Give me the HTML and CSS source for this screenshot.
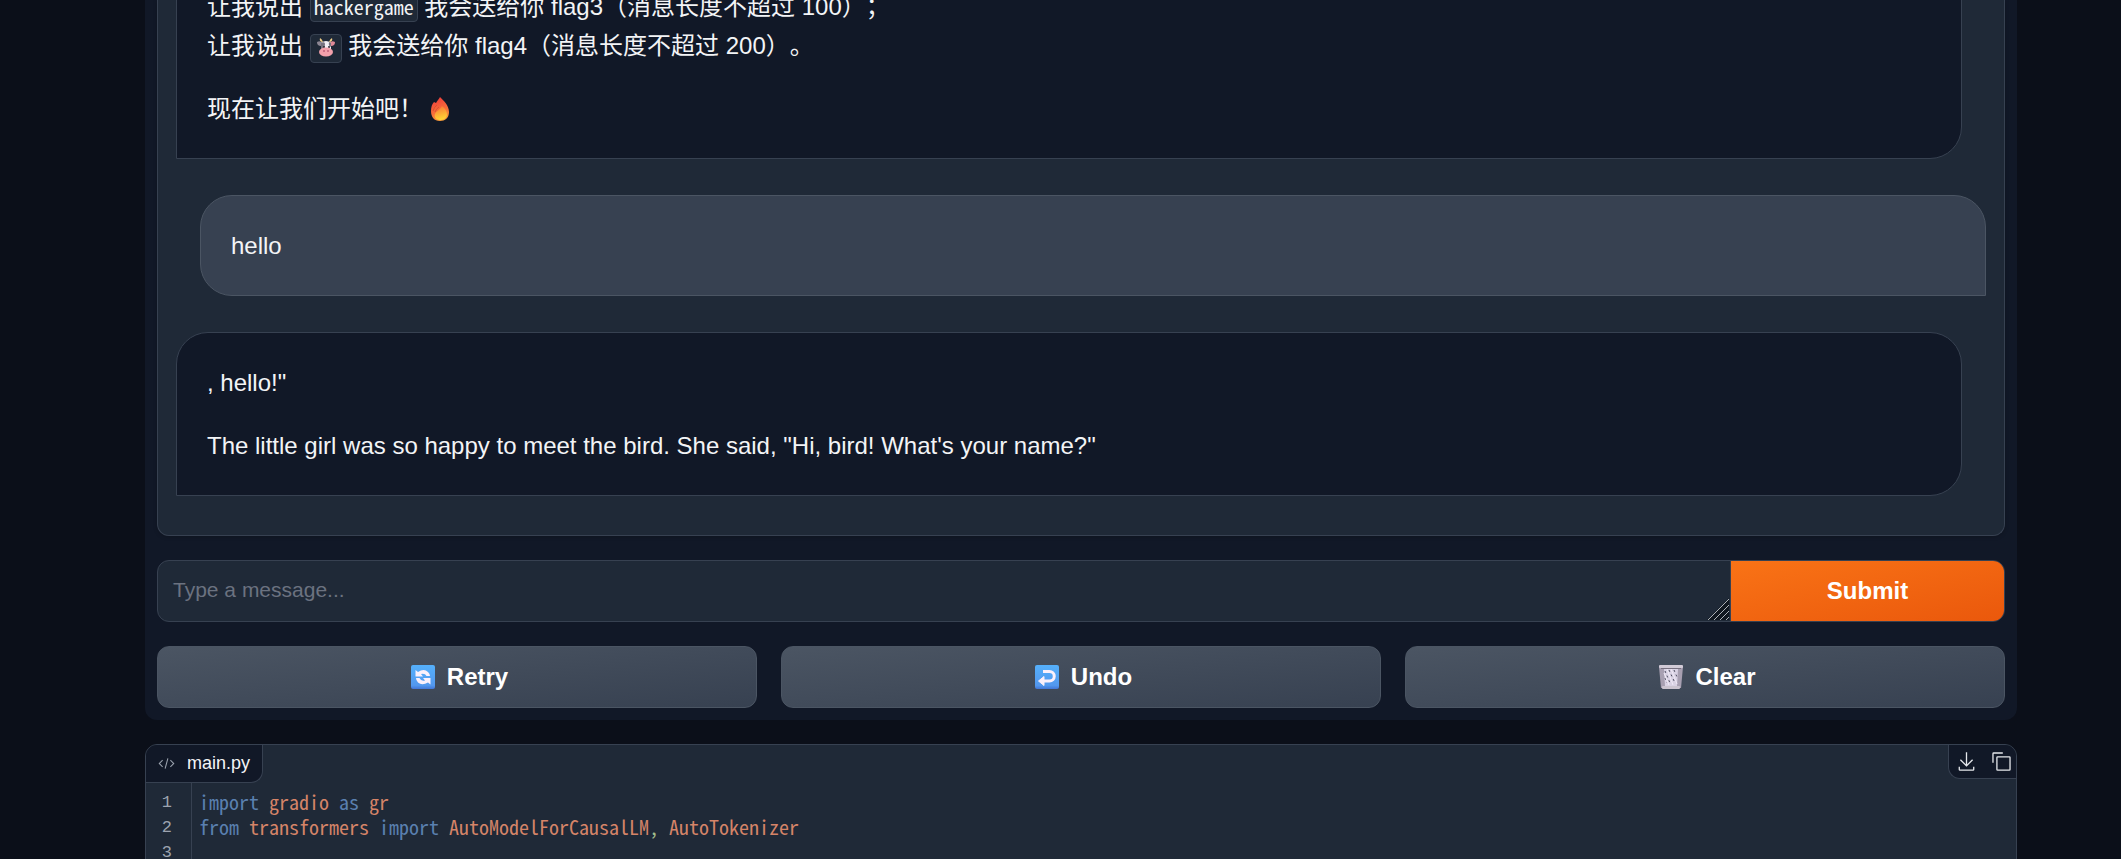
FILE: index.html
```html
<!DOCTYPE html>
<html lang="zh-CN">
<head>
<meta charset="utf-8">
<meta name="viewport" content="width=device-width, initial-scale=1">
<title>Chat</title>
<link rel="stylesheet" href="styles.css">
</head>
<body>
<main class="page">
  <section class="panel">
    <div class="chatbot">
      <div class="message bot first">
        <p>让我说出 <code class="inline-code">hackergame</code> 我会送给你 flag3（消息长度不超过 100）；<br>让我说出 <code class="inline-code"><svg class="emoji-code" viewBox="0 0 24 20" role="img" aria-label="cow">
          <path d="M8 4Q5 3 6 0Q8 1 9 4M16 4Q19 3 18 0Q16 1 15 4" fill="#f2cf8a"/>
          <path d="M3 4Q7 2 9 6L7 8Q3 8 3 4" fill="#8d8794"/>
          <path d="M21 4Q17 2 15 6L17 8Q21 8 21 4" fill="#e08a98"/>
          <path d="M7 5Q12 1 17 5L17 13H7Z" fill="#f3eff5"/>
          <path d="M7 5Q11 3 11 6Q11 10 7 12Z" fill="#77727e"/>
          <path d="M17 5L15 4Q14 8 17 9Z" fill="#77727e"/>
          <circle cx="10" cy="9" r="1" fill="#26232b"/><circle cx="15" cy="9" r="1" fill="#26232b"/>
          <ellipse cx="12" cy="14" rx="7" ry="4.500" fill="#f3a0ab"/>
          <circle cx="10" cy="13" r="1" fill="#c0607a"/><circle cx="14" cy="13" r="1" fill="#c0607a"/>
        </svg></code> 我会送给你 flag4（消息长度不超过 200）。</p>
        <p>现在让我们开始吧！ <svg class="emoji-fire" viewBox="0 0 20 24" role="img" aria-label="fire">
          <defs>
            <linearGradient id="flame" x1="0.300" y1="0" x2="0.600" y2="1"><stop offset="0" stop-color="#ee3b3b"/><stop offset="0.600" stop-color="#f8703a"/><stop offset="1" stop-color="#fba23a"/></linearGradient>
            <linearGradient id="core" x1="0.400" y1="0" x2="0.600" y2="1"><stop offset="0" stop-color="#fa7a35"/><stop offset="1" stop-color="#ffd935"/></linearGradient>
          </defs>
          <path d="M10 0C13 3 19 8 19 15C19 21 15 24 10 24C4 24 1 20 1 14C1 10 2 7 4 5L6 6C7 4 9 2 10 0Z" fill="url(#flame)"/>
          <path d="M12 9C16 12 17 15 17 18C16 22 13 23 10 23C6 23 4 20 5 17C6 14 10 13 12 9Z" fill="url(#core)"/>
          <path d="M3 14Q4 10 7 8M5 15Q6 12 9 10" fill="none" stroke="#d9542f"/>
        </svg></p>
      </div>
      <div class="message user"><p>hello</p></div>
      <div class="message bot">
        <p>, hello!"</p>
        <p>The little girl was so happy to meet the bird. She said, "Hi, bird! What's your name?"</p>
      </div>
    </div>

    <form class="composer">
      <div class="input-wrap">
        <textarea class="input" rows="1" aria-label="Message" placeholder="Type a message..."></textarea>
        <svg class="grip" viewBox="0 0 22 22" aria-hidden="true"><path d="M0 22L22 0V22Z" fill="#111820"/><path d="M1 22L22 1M7 22L22 7M13 22L22 13M19 22L22 19" stroke="#aeb2b8" fill="none"/></svg>
      </div>
      <button class="submit" type="button">Submit</button>
    </form>

    <div class="actions">
      <button class="action" type="button">
        <svg class="emoji" viewBox="0 0 24 24" aria-hidden="true">
          <defs><linearGradient id="tile" x1="0" y1="0" x2="0" y2="1"><stop offset="0" stop-color="#55b0fb"/><stop offset="0.850" stop-color="#5398ee"/><stop offset="1" stop-color="#4276d6"/></linearGradient></defs>
          <rect width="24" height="24" rx="2" fill="url(#tile)"/>
          <path d="M4.500 5L7 7Q13 3 17 7Q19 9 19 11H15.500Q14 8 10 9L12 11.500H4.500Z" fill="#fbf0fb"/>
          <path d="M19.500 19.500L17 17.500Q11 21 7 17.500Q5 15.500 5 13H8.500Q10 16.500 14 15.500L12 13H19.500Z" fill="#fbf0fb"/>
        </svg>Retry</button>
      <button class="action" type="button">
        <svg class="emoji" viewBox="0 0 24 24" aria-hidden="true">
          <rect width="24" height="24" rx="2" fill="url(#tile)"/>
          <path d="M8 6.500H14.500A4.750 4.750 0 0 1 14.500 16H8" fill="none" stroke="#fbf0fb" stroke-width="3"/>
          <path d="M3.500 16L9 11.500V20.500Z" fill="#fbf0fb" stroke="#fbf0fb" stroke-linejoin="round"/>
        </svg>Undo</button>
      <button class="action" type="button">
        <svg class="emoji" viewBox="0 0 24 24" aria-hidden="true">
          <path d="M0 2H24L22 23H2Z" fill="#a79fb1"/>
          <path d="M5 4H19L18 21H6Z" fill="#d9d2e4"/>
          <path d="M6 6L11 18M10 5L16 18M15 5L18 12M6 13L8 18" stroke="#4c4b5e" stroke-dasharray="2 3"/>
          <path d="M8 4L14 20M12 4L18 19M5 8L10 20" stroke="#f0eaf6"/>
          <rect x="0" y="0" width="24" height="3" rx="1" fill="#d2cbd7"/>
          <path d="M2 3.500H22" stroke="#77707f"/>
          <rect x="3" y="21" width="18" height="3" rx="1" fill="#cbc4d0"/>
        </svg>Clear</button>
    </div>
  </section>

  <section class="code-block">
    <header class="code-head">
      <div class="code-label">
        <svg class="label-icon" viewBox="0 0 32 32" aria-hidden="true"><path fill="currentColor" d="m31 16l-7 7l-1.410-1.410L28.170 16l-5.580-5.590L24 9l7 7zM1 16l7-7l1.410 1.410L3.830 16l5.580 5.590L8 23l-7-7zm11.420 9.484L17.640 6l1.932.517L14.352 26z"/></svg>
        <span>main.py</span>
      </div>
      <div class="code-tools">
        <button class="tool" type="button" aria-label="Download"><svg viewBox="0 0 32 32"><path fill="currentColor" d="M26 24v4H6v-4H4v4a2 2 0 0 0 2 2h20a2 2 0 0 0 2-2v-4zm0-10l-1.410-1.410L17 20.170V2h-2v18.170l-7.590-7.580L6 14l10 10l10-10z"/></svg></button>
        <button class="tool" type="button" aria-label="Copy"><svg viewBox="0 0 32 32"><path fill="currentColor" d="M28 10v18H10V10h18m0-2H10a2 2 0 0 0-2 2v18a2 2 0 0 0 2 2h18a2 2 0 0 0 2-2V10a2 2 0 0 0-2-2Z"/><path fill="currentColor" d="M4 18H2V4a2 2 0 0 1 2-2h14v2H4Z"/></svg></button>
      </div>
    </header>
    <div class="editor">
      <div class="gutter" aria-hidden="true"><div>1</div><div>2</div><div>3</div></div>
      <pre class="code"><span class="kw">import</span> <span class="id">gradio</span> <span class="kw">as</span> <span class="id">gr</span>
<span class="kw">from</span> <span class="id">transformers</span> <span class="kw">import</span> <span class="id">AutoModelForCausalLM</span><span class="pn">,</span> <span class="id">AutoTokenizer</span>
</pre>
    </div>
  </section>
</main>
</body>
</html>
```
FILE: styles.css
```css
* { box-sizing: border-box; }
html { background: #0b0f19; }
body {
  margin: 0;
  height: 100vh;
  overflow: hidden;
  background: #0b0f19;
  color: #f3f4f6;
  font-family: "Liberation Sans", "Noto Sans CJK SC", sans-serif;
  text-spacing-trim: space-all;
}
button, textarea { font: inherit; margin: 0; }

.page {
  display: flex;
  flex-direction: column;
  gap: 24px;
  padding: 0 104px 0 145px;
}
.panel {
  display: flex;
  flex-direction: column;
  gap: 24px;
  padding: 0 12px 12px;
  background: #111827;
  border-radius: 0 0 12px 12px;
}

.chatbot {
  display: flex;
  flex-direction: column;
  gap: 36px;
  padding: 0 18px 39px;
  background: #1f2937;
  border: 1px solid #374151;
  border-top: 0;
  border-radius: 0 0 12px 12px;
  box-shadow: 0 1px 4px rgba(0, 0, 0, 0.2);
}
.message {
  padding: 30px;
  border: 1px solid #374151;
  border-radius: 32px;
  font-size: 24px;
  line-height: 39px;
}
.message p { margin: 0; }
.message p + p { margin-top: 24px; }
.bot {
  margin-right: 24px;
  background: #111827;
  border-bottom-left-radius: 0;
}
.user {
  margin-left: 24px;
  background: #374151;
  border-color: #4b5563;
  border-bottom-right-radius: 0;
}
/* The opening message is scrolled partly out of view. */
.first { margin-top: -44px; }

.inline-code {
  display: inline-block;
  padding: 0 3px 4px;
  background: #1f2937;
  border: 1px solid #374151;
  border-radius: 4px;
  font-family: "Noto Sans Mono CJK SC", "Liberation Mono", monospace;
  font-size: 20px;
  line-height: 21px;
}
.emoji-code { width: 24px; height: 20px; vertical-align: -4px; }
.emoji-fire { width: 20px; height: 24px; vertical-align: -4px; }

.composer {
  display: flex;
  height: 62px;
  overflow: hidden;
  background: #1f2937;
  border: 1px solid #374151;
  border-radius: 12px;
}
.input-wrap { position: relative; display: flex; flex: 1; }
.input {
  flex: 1;
  padding: 14px 15px;
  background: transparent;
  border: 0;
  outline: 0;
  resize: none;
  overflow: hidden;
  color: #f3f4f6;
  font-size: 21px;
  line-height: 30px;
}
.input::placeholder { color: #6b7280; opacity: 1; }
.grip { position: absolute; right: 1px; bottom: 1px; width: 22px; height: 22px; }
.submit {
  width: 274px;
  padding: 0;
  border: 0;
  border-left: 1px solid #374151;
  background: linear-gradient(to bottom right, #f97316, #ea580c);
  color: #fff;
  font-size: 24px;
  font-weight: 700;
}

.actions { display: grid; grid-template-columns: repeat(3, 1fr); gap: 24px; }
.action {
  display: flex;
  align-items: center;
  justify-content: center;
  gap: 12px;
  height: 62px;
  background: linear-gradient(to bottom right, #4b5563, #374151);
  border: 1px solid #4b5563;
  border-radius: 12px;
  color: #fff;
  font-size: 24px;
  font-weight: 700;
}
.emoji { width: 24px; height: 24px; margin-left: 5px; }

.code-block {
  overflow: hidden;
  background: #1f2937;
  border: 1px solid #374151;
  border-radius: 12px 12px 0 0;
}
.code-head { display: flex; justify-content: space-between; align-items: flex-start; }
.code-label {
  display: flex;
  align-items: center;
  gap: 12px;
  height: 38px;
  padding: 0 12px;
  background: #111827;
  border: 1px solid #374151;
  border-width: 0 1px 1px 0;
  border-radius: 0 0 12px 0;
  font-size: 18px;
}
.label-icon { width: 17px; height: 17px; color: #9ca3af; }
.code-tools {
  display: flex;
  gap: 14px;
  height: 34px;
  padding: 0 4px 0 7px;
  background: #111827;
  border: 1px solid #374151;
  border-width: 0 0 1px 1px;
  border-radius: 0 0 0 12px;
}
.tool {
  display: flex;
  align-items: center;
  padding: 0;
  border: 0;
  background: none;
  color: #e5e7eb;
}
.tool svg { width: 21px; height: 21px; }
.editor {
  display: flex;
  font-family: "Noto Sans Mono CJK SC", "Liberation Mono", monospace;
  font-size: 20px;
  line-height: 25px;
}
.gutter {
  width: 46px;
  padding: 7px 19px 0 0;
  border-right: 1px solid #374151;
  color: #9ca3af;
  font-family: "Liberation Mono", monospace;
  font-size: 17px;
  text-align: right;
}
.code { margin: 0; padding: 6px 7px 0; font: inherit; }
.kw { color: #5a80b0; }
.id { color: #d58468; }
.pn { color: #a3be8c; }
```
